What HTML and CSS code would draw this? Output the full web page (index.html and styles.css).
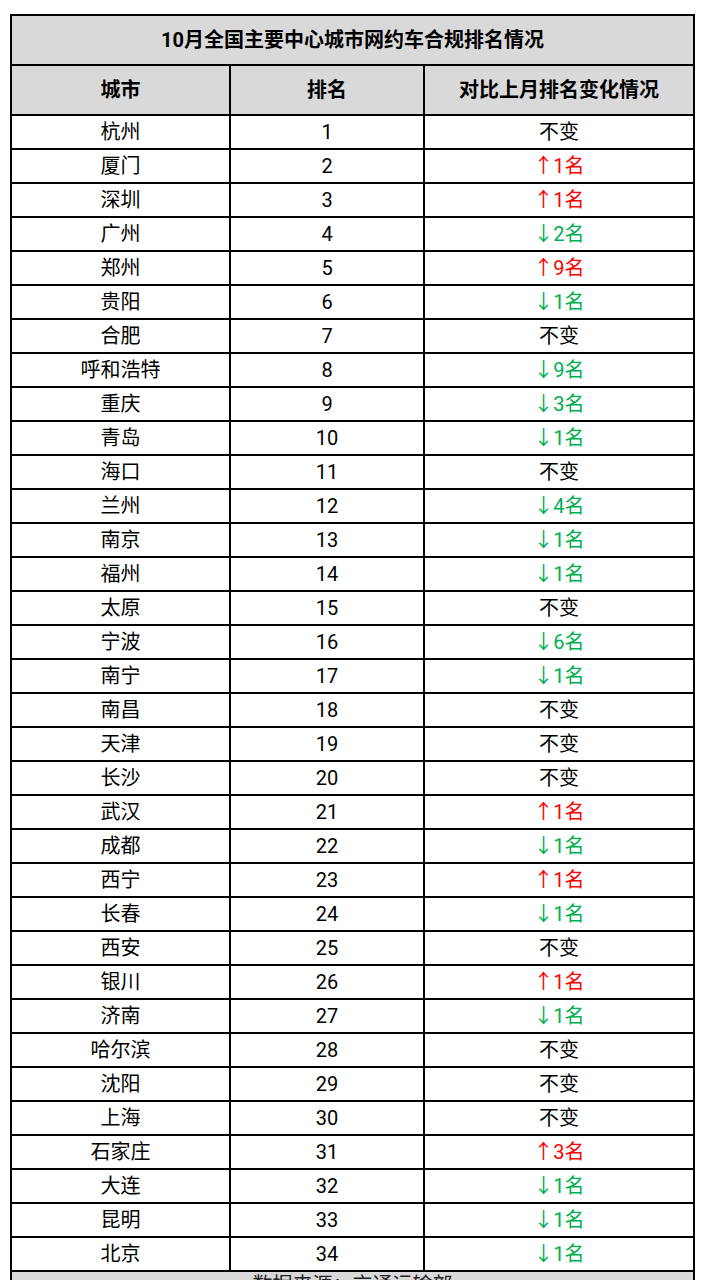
FILE: index.html
```html
<!DOCTYPE html>
<html lang="zh">
<head>
<meta charset="utf-8">
<link rel="stylesheet" href="styles.css">
</head>
<body>
<table class="rank">
<colgroup><col class="c1"><col class="c2"><col class="c3"></colgroup>
<thead>
<tr class="title"><th colspan="3">10月全国主要中心城市网约车合规排名情况</th></tr>
<tr class="head"><th>城市</th><th>排名</th><th>对比上月排名变化情况</th></tr>
</thead>
<tbody>
<tr><td>杭州</td><td>1</td><td>不变</td></tr>
<tr><td>厦门</td><td>2</td><td class="up">↑1名</td></tr>
<tr><td>深圳</td><td>3</td><td class="up">↑1名</td></tr>
<tr><td>广州</td><td>4</td><td class="down">↓2名</td></tr>
<tr><td>郑州</td><td>5</td><td class="up">↑9名</td></tr>
<tr><td>贵阳</td><td>6</td><td class="down">↓1名</td></tr>
<tr><td>合肥</td><td>7</td><td>不变</td></tr>
<tr><td>呼和浩特</td><td>8</td><td class="down">↓9名</td></tr>
<tr><td>重庆</td><td>9</td><td class="down">↓3名</td></tr>
<tr><td>青岛</td><td>10</td><td class="down">↓1名</td></tr>
<tr><td>海口</td><td>11</td><td>不变</td></tr>
<tr><td>兰州</td><td>12</td><td class="down">↓4名</td></tr>
<tr><td>南京</td><td>13</td><td class="down">↓1名</td></tr>
<tr><td>福州</td><td>14</td><td class="down">↓1名</td></tr>
<tr><td>太原</td><td>15</td><td>不变</td></tr>
<tr><td>宁波</td><td>16</td><td class="down">↓6名</td></tr>
<tr><td>南宁</td><td>17</td><td class="down">↓1名</td></tr>
<tr><td>南昌</td><td>18</td><td>不变</td></tr>
<tr><td>天津</td><td>19</td><td>不变</td></tr>
<tr><td>长沙</td><td>20</td><td>不变</td></tr>
<tr><td>武汉</td><td>21</td><td class="up">↑1名</td></tr>
<tr><td>成都</td><td>22</td><td class="down">↓1名</td></tr>
<tr><td>西宁</td><td>23</td><td class="up">↑1名</td></tr>
<tr><td>长春</td><td>24</td><td class="down">↓1名</td></tr>
<tr><td>西安</td><td>25</td><td>不变</td></tr>
<tr><td>银川</td><td>26</td><td class="up">↑1名</td></tr>
<tr><td>济南</td><td>27</td><td class="down">↓1名</td></tr>
<tr><td>哈尔滨</td><td>28</td><td>不变</td></tr>
<tr><td>沈阳</td><td>29</td><td>不变</td></tr>
<tr><td>上海</td><td>30</td><td>不变</td></tr>
<tr><td>石家庄</td><td>31</td><td class="up">↑3名</td></tr>
<tr><td>大连</td><td>32</td><td class="down">↓1名</td></tr>
<tr><td>昆明</td><td>33</td><td class="down">↓1名</td></tr>
<tr><td>北京</td><td>34</td><td class="down">↓1名</td></tr>
</tbody>
<tfoot>
<tr class="foot"><td colspan="3">数据来源：交通运输部</td></tr>
</tfoot>
</table>
</body>
</html>
```
FILE: styles.css
```css
html, body {
  margin: 0;
  padding: 0;
  background: #ffffff;
}
body {
  padding: 14px 0 0 10px;
  font-family: Roboto, "Noto Sans CJK SC", sans-serif;
  color: #000;
}
.rank {
  border-collapse: collapse;
  width: 683px;
  table-layout: fixed;
}
.c1 { width: 219px; }
.c2 { width: 194px; }
.c3 { width: 270px; }
.rank th, .rank td {
  border: 2px solid #000;
  text-align: center;
  padding: 0;
  font-size: 20px;
  line-height: 24px;
}
.rank th {
  background: #d9d9d9;
  font-weight: bold;
}
.title th { height: 48px; }
.head th { height: 48px; }
.rank tbody td { height: 32px; }
.up { color: #ff0000; }
.down { color: #00b050; }
.foot td {
  background: #d9d9d9;
  height: 32px;
  vertical-align: top;
  padding-top: 1px;
  color: #222;
}
```
